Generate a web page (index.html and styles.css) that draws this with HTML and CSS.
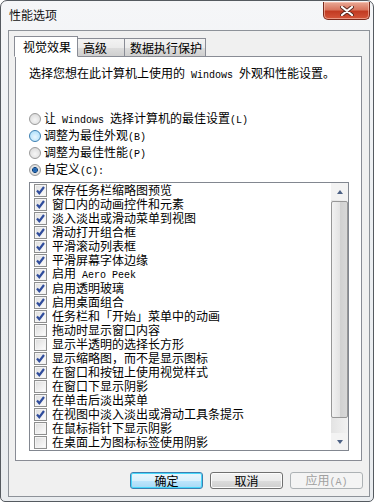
FILE: index.html
```html
<!DOCTYPE html>
<html lang="zh-CN">
<head>
    <meta charset="UTF-8">
    <meta name="viewport" content="width=device-width, initial-scale=1.0">
    <title>性能选项</title>
    <link rel="stylesheet" href="styles.css">
</head>
<body>
    <div class="window">
        <div class="titlebar">
            <span class="title">性能选项</span>
            <button class="close" aria-label="关闭">
                <svg width="14" height="10" viewBox="0 0 14 10">
                    <path d="M2 1 L12 9 M12 1 L2 9" stroke="#5a2a20" stroke-width="4" stroke-linecap="round"/>
                    <path d="M2 1 L12 9 M12 1 L2 9" stroke="#ffffff" stroke-width="2.2" stroke-linecap="round"/>
                </svg>
            </button>
        </div>

        <div class="client">
            <div class="tabs">
                <div class="tab active">视觉效果</div>
                <div class="tab tab-short">高级</div>
                <div class="tab tab-long">数据执行保护</div>
            </div>

            <div class="panel">
                <p class="intro">选择您想在此计算机上使用的<span class="latin"> Windows </span>外观和性能设置。</p>

                <div class="radios">
                    <label class="radio-row"><span class="radio"></span><span>让<span class="latin"> Windows </span>选择计算机的最佳设置<span class="latin">(L)</span></span></label>
                    <label class="radio-row"><span class="radio hover"></span><span>调整为最佳外观<span class="latin">(B)</span></span></label>
                    <label class="radio-row"><span class="radio"></span><span>调整为最佳性能<span class="latin">(P)</span></span></label>
                    <label class="radio-row"><span class="radio on"></span><span>自定义<span class="latin">(C):</span></span></label>
                </div>

                <div class="listbox">
                    <ul class="items">
                        <li><span class="cb on"></span><span>保存任务栏缩略图预览</span></li>
                        <li><span class="cb on"></span><span>窗口内的动画控件和元素</span></li>
                        <li><span class="cb on"></span><span>淡入淡出或滑动菜单到视图</span></li>
                        <li><span class="cb on"></span><span>滑动打开组合框</span></li>
                        <li><span class="cb on"></span><span>平滑滚动列表框</span></li>
                        <li><span class="cb on"></span><span>平滑屏幕字体边缘</span></li>
                        <li><span class="cb on"></span><span>启用<span class="latin"> Aero Peek</span></span></li>
                        <li><span class="cb on"></span><span>启用透明玻璃</span></li>
                        <li><span class="cb on"></span><span>启用桌面组合</span></li>
                        <li><span class="cb on"></span><span>任务栏和「开始」菜单中的动画</span></li>
                        <li><span class="cb"></span><span>拖动时显示窗口内容</span></li>
                        <li><span class="cb"></span><span>显示半透明的选择长方形</span></li>
                        <li><span class="cb on"></span><span>显示缩略图，而不是显示图标</span></li>
                        <li><span class="cb on"></span><span>在窗口和按钮上使用视觉样式</span></li>
                        <li><span class="cb"></span><span>在窗口下显示阴影</span></li>
                        <li><span class="cb on"></span><span>在单击后淡出菜单</span></li>
                        <li><span class="cb on"></span><span>在视图中淡入淡出或滑动工具条提示</span></li>
                        <li><span class="cb"></span><span>在鼠标指针下显示阴影</span></li>
                        <li><span class="cb"></span><span>在桌面上为图标标签使用阴影</span></li>
                    </ul>
                    <div class="scrollbar">
                        <div class="arrow"><span class="tri up"></span></div>
                        <div class="thumb"></div>
                        <div class="track"></div>
                        <div class="arrow"><span class="tri down"></span></div>
                    </div>
                </div>
            </div>

            <div class="buttons">
                <button class="btn default">确定</button>
                <button class="btn">取消</button>
                <button class="btn" disabled>应用<span class="latin">(A)</span></button>
            </div>
        </div>
    </div>
</body>
</html>
```

FILE: styles.css
```css
html, body {
    margin: 0;
    padding: 0;
}

body {
    width: 377px;
    height: 504px;
    background-color: #ffffff;
    font-family: "Noto Sans CJK SC", "Noto Sans", sans-serif;
    font-size: 12px;
    color: #000;
    overflow: hidden;
}

.latin {
    font-family: "Liberation Mono", "DejaVu Sans Mono", monospace;
    font-size: 10px;
    white-space: pre;
}

.window {
    width: 374px;
    height: 502px;
    box-sizing: border-box;
    border: 1px solid #555a60;
    border-radius: 7px 7px 5px 5px;
    background: linear-gradient(180deg, #f5f6f8 0%, #eceff2 40%, #e9ecef 100%);
    padding: 0 3px 4px 7px;
    display: flex;
    flex-direction: column;
}

/* title bar */
.titlebar {
    height: 29px;
    display: flex;
    justify-content: space-between;
    align-items: flex-start;
}

.title {
    margin: 6px 0 0 1px;
    line-height: 16px;
    color: #111;
}

.close {
    margin-top: 1px;
    margin-right: 0;
    width: 47px;
    height: 18px;
    padding: 0;
    border: 1px solid #7a2a1c;
    border-top: none;
    border-radius: 0 0 5px 5px;
    background: linear-gradient(180deg, #e9a996 0%, #d9765f 45%, #c23b22 55%, #d4553a 100%);
    box-shadow: inset 0 0 0 1px rgba(255, 210, 195, 0.55);
    display: flex;
    align-items: center;
    justify-content: center;
}

/* client area */
.client {
    height: 467px;
    box-sizing: border-box;
    border: 1px solid #8d9299;
    background-color: #f0f0f0;
    padding: 5px 7px 0 6px;
}

.tabs {
    display: flex;
    align-items: flex-end;
    height: 21px;
    margin-left: -1px;
    margin-bottom: -1px;
}

.tab {
    box-sizing: border-box;
    height: 19px;
    line-height: 17px;
    padding-left: 5px;
    border: 1px solid #898c95;
    border-left: none;
    background: linear-gradient(180deg, #f3f3f3 0%, #ebebeb 50%, #dddddd 51%, #cfcfcf 100%);
    color: #000;
    font-size: 12px;
}

.tab.active {
    position: relative;
    z-index: 1;
    height: 21px;
    width: 64px;
    line-height: 19px;
    padding-left: 8px;
    border-left: 1px solid #898c95;
    border-bottom-color: #ffffff;
    background: #ffffff;
}

.tab-short {
    width: 47px;
}

.tab-long {
    width: 81px;
}

.panel {
    height: 405px;
    box-sizing: border-box;
    border: 1px solid #898c95;
    background-color: #ffffff;
    padding: 9px 12px 0 13px;
}

.intro {
    margin: 0;
    line-height: 14px;
}

/* radio buttons */
.radios {
    margin-top: 27px;
}

.radio-row {
    display: flex;
    align-items: center;
    height: 17px;
    line-height: 17px;
}

.radio {
    width: 12px;
    height: 12px;
    box-sizing: border-box;
    border-radius: 50%;
    border: 1px solid #9a9a9a;
    background: radial-gradient(circle at 50% 60%, #f6f6f6 0%, #e2e2e2 60%, #cfcfcf 100%);
    margin-right: 3px;
    flex-shrink: 0;
}

.radio.hover {
    border-color: #3c7fb1;
    background: radial-gradient(circle at 50% 60%, #eaf6fd 0%, #bde6fd 60%, #a7d9f5 100%);
}

.radio.on {
    background: radial-gradient(circle, #1c5fa8 0%, #2f6fb8 28%, #0b3a6e 38%, #e6e6e6 44%, #d2d2d2 100%);
}

/* list of effects */
.listbox {
    margin-top: 4px;
    width: 320px;
    height: 269px;
    box-sizing: border-box;
    border: 1px solid #828790;
    display: flex;
}

.items {
    flex: 1;
    list-style: none;
    margin: 0;
    padding: 0;
}

.items li {
    display: flex;
    align-items: center;
    height: 14px;
    line-height: 14px;
    white-space: nowrap;
}

.cb {
    width: 13px;
    height: 13px;
    box-sizing: border-box;
    border: 1px solid #8e8f8f;
    background: linear-gradient(135deg, #dcdcdc 0%, #f4f4f4 70%, #ffffff 100%);
    box-shadow: inset 0 0 0 1px #f4f4f4;
    margin: 0 5px 0 4px;
    flex-shrink: 0;
}

.cb.on {
    background:
        url("data:image/svg+xml,%3Csvg xmlns='http://www.w3.org/2000/svg' width='11' height='11'%3E%3Cpath d='M2 5.5 L4.3 8.2 L9 2' fill='none' stroke='%23304d9c' stroke-width='2.2'/%3E%3C/svg%3E") center / 11px 11px no-repeat,
        linear-gradient(135deg, #dcdcdc 0%, #f4f4f4 70%, #ffffff 100%);
}

/* scrollbar */
.scrollbar {
    width: 17px;
    display: flex;
    flex-direction: column;
    background: linear-gradient(90deg, #e3e3e3, #f2f2f2);
}

.arrow {
    height: 17px;
    display: flex;
    align-items: center;
    justify-content: center;
    background: #f3f3f3;
}

.tri {
    width: 0;
    height: 0;
    border-left: 3.5px solid transparent;
    border-right: 3.5px solid transparent;
}

.tri.up {
    border-bottom: 4px solid #4d6185;
}

.tri.down {
    border-top: 4px solid #4d6185;
}

.thumb {
    margin-top: 1px;
    height: 217px;
    box-sizing: border-box;
    border: 1px solid #979797;
    border-radius: 2px;
    background: linear-gradient(90deg, #f2f2f2 0%, #e4e4e4 50%, #d0d0d0 51%, #d8d8d8 100%);
}

.track {
    flex: 1;
}

/* dialog buttons */
.buttons {
    display: flex;
    justify-content: flex-end;
    gap: 7px;
    margin-top: 11px;
    margin-right: -1px;
}

.btn {
    width: 73px;
    height: 17px;
    padding: 0;
    box-sizing: border-box;
    border: 1px solid #707070;
    border-radius: 3px;
    background: linear-gradient(180deg, #f2f2f2 0%, #ebebeb 50%, #dddddd 51%, #cfcfcf 100%);
    box-shadow: inset 0 0 0 1px #fcfcfc;
    font-family: "Noto Sans CJK SC", "Noto Sans", sans-serif;
    font-size: 12px;
    line-height: 14px;
    color: #000;
}

.btn.default {
    border-color: #3c7fb1;
    background: linear-gradient(180deg, #eaf6fd 0%, #d9f0fc 50%, #bee6fd 51%, #a7d9f5 100%);
    box-shadow: inset 0 0 0 1px #48d8fb;
}

.btn:disabled {
    border-color: #adb2b5;
    background: #f4f4f4;
    box-shadow: none;
    color: #a0a0a0;
}
```
